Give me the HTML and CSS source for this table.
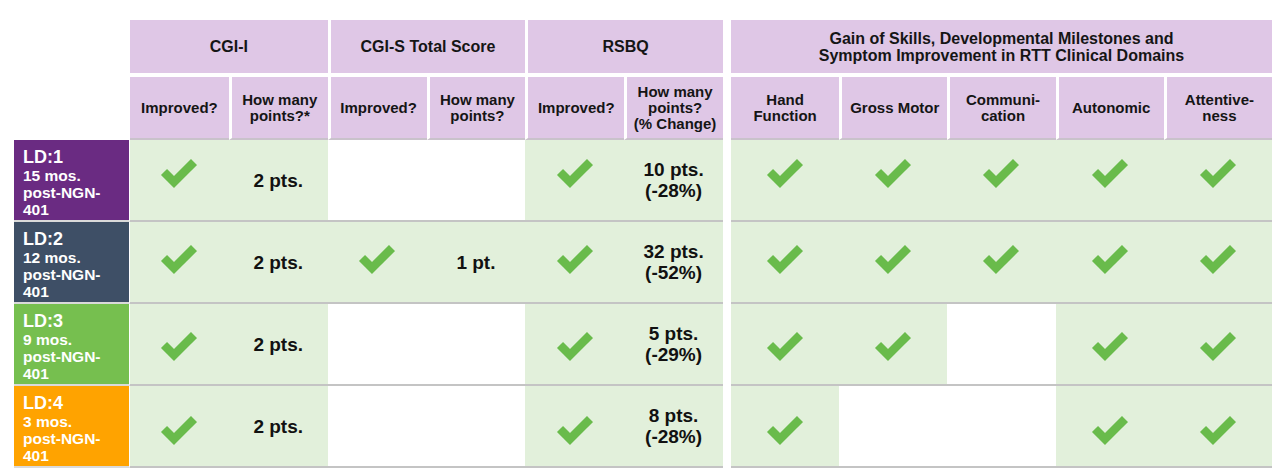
FILE: index.html
```html
<!DOCTYPE html>
<html>
<head>
<meta charset="utf-8">
<link rel="stylesheet" href="styles.css">
</head>
<body>
<svg width="0" height="0" class="defs">
  <defs>
    <symbol id="chk" viewBox="0 0 38 30"><polyline points="4,13 14,23 34,3"/></symbol>
  </defs>
</svg>
<div class="page">
  <div class="tbl left">
    <div class="corner"></div>
    <div class="gh first">CGI-I</div>
    <div class="gh">CGI-S Total Score</div>
    <div class="gh">RSBQ</div>
    <div class="sh first">Improved?</div>
    <div class="sh">How many<br>points?*</div>
    <div class="sh">Improved?</div>
    <div class="sh">How many<br>points?</div>
    <div class="sh">Improved?</div>
    <div class="sh">How many<br>points?<br>(% Change)</div>

    <div class="lab ld1 r1"><span class="ld">LD:1</span><span>15 mos.</span><span>post-NGN-</span><span>401</span></div>
    <div class="c g r1"><svg class="chk"><use href="#chk"/></svg></div>
    <div class="c g r1 t">2 pts.</div>
    <div class="c w r1"></div>
    <div class="c w r1"></div>
    <div class="c g r1"><svg class="chk"><use href="#chk"/></svg></div>
    <div class="c g r1 t">10 pts.<br>(-28%)</div>

    <div class="lab ld2 r2"><span class="ld">LD:2</span><span>12 mos.</span><span>post-NGN-</span><span>401</span></div>
    <div class="c g r2"><svg class="chk"><use href="#chk"/></svg></div>
    <div class="c g r2 t">2 pts.</div>
    <div class="c g r2"><svg class="chk"><use href="#chk"/></svg></div>
    <div class="c g r2 t">1 pt.</div>
    <div class="c g r2"><svg class="chk"><use href="#chk"/></svg></div>
    <div class="c g r2 t">32 pts.<br>(-52%)</div>

    <div class="lab ld3 r3"><span class="ld">LD:3</span><span>9 mos.</span><span>post-NGN-</span><span>401</span></div>
    <div class="c g r3"><svg class="chk"><use href="#chk"/></svg></div>
    <div class="c g r3 t">2 pts.</div>
    <div class="c w r3"></div>
    <div class="c w r3"></div>
    <div class="c g r3"><svg class="chk"><use href="#chk"/></svg></div>
    <div class="c g r3 t">5 pts.<br>(-29%)</div>

    <div class="lab ld4 r4"><span class="ld">LD:4</span><span>3 mos.</span><span>post-NGN-</span><span>401</span></div>
    <div class="c g r4"><svg class="chk"><use href="#chk"/></svg></div>
    <div class="c g r4 t">2 pts.</div>
    <div class="c w r4"></div>
    <div class="c w r4"></div>
    <div class="c g r4"><svg class="chk"><use href="#chk"/></svg></div>
    <div class="c g r4 t">8 pts.<br>(-28%)</div>
  </div>

  <div class="tbl right">
    <div class="gh first wide">Gain of Skills, Developmental Milestones and<br>Symptom Improvement in RTT Clinical Domains</div>
    <div class="sh first">Hand<br>Function</div>
    <div class="sh">Gross Motor</div>
    <div class="sh">Communi-<br>cation</div>
    <div class="sh">Autonomic</div>
    <div class="sh">Attentive-<br>ness</div>

    <div class="c g r1"><svg class="chk"><use href="#chk"/></svg></div>
    <div class="c g r1"><svg class="chk"><use href="#chk"/></svg></div>
    <div class="c g r1"><svg class="chk"><use href="#chk"/></svg></div>
    <div class="c g r1"><svg class="chk"><use href="#chk"/></svg></div>
    <div class="c g r1"><svg class="chk"><use href="#chk"/></svg></div>

    <div class="c g r2"><svg class="chk"><use href="#chk"/></svg></div>
    <div class="c g r2"><svg class="chk"><use href="#chk"/></svg></div>
    <div class="c g r2"><svg class="chk"><use href="#chk"/></svg></div>
    <div class="c g r2"><svg class="chk"><use href="#chk"/></svg></div>
    <div class="c g r2"><svg class="chk"><use href="#chk"/></svg></div>

    <div class="c g r3"><svg class="chk"><use href="#chk"/></svg></div>
    <div class="c g r3"><svg class="chk"><use href="#chk"/></svg></div>
    <div class="c w r3"></div>
    <div class="c g r3"><svg class="chk"><use href="#chk"/></svg></div>
    <div class="c g r3"><svg class="chk"><use href="#chk"/></svg></div>

    <div class="c g r4"><svg class="chk"><use href="#chk"/></svg></div>
    <div class="c w r4"></div>
    <div class="c w r4"></div>
    <div class="c g r4"><svg class="chk"><use href="#chk"/></svg></div>
    <div class="c g r4"><svg class="chk"><use href="#chk"/></svg></div>
  </div>
</div>
</body>
</html>
```

FILE: styles.css
```css
* { box-sizing: border-box; }
html, body { margin: 0; padding: 0; background: #fff; }
body {
  font-family: "Liberation Sans", Arial, sans-serif;
  font-weight: bold;
  color: #151515;
  width: 1280px;
  height: 476px;
  overflow: hidden;
}
.defs { position: absolute; }
.page {
  display: flex;
  gap: 8px;
  padding: 20px 0 0 14px;
}
.tbl {
  display: grid;
  grid-template-rows: 57px 63px repeat(4, 82px);
}
.left {
  width: 709px;
  grid-template-columns: 116px repeat(6, 1fr);
}
.right {
  width: 541px;
  grid-template-columns: repeat(5, 1fr);
}
.corner { grid-row: span 2; }
.gh {
  grid-column: span 2;
  background: #dfc7e6;
  border-bottom: 4px solid #fff;
  border-left: 3px solid #fff;
  display: flex;
  align-items: center;
  justify-content: center;
  text-align: center;
  font-size: 16px;
  line-height: 17px;
}
.gh.first { border-left: 0; }
.gh.wide { grid-column: span 5; font-size: 16px; }
.sh {
  background: #dfc7e6;
  border-left: 3px solid #fff;
  border-bottom: 2px solid #c9c2cb;
  display: flex;
  align-items: center;
  justify-content: center;
  text-align: center;
  font-size: 15px;
  line-height: 16px;
}
.sh.first { border-left: 0; }
.c {
  border-bottom: 2px solid #c4c4c4;
  display: flex;
  align-items: center;
  justify-content: center;
  text-align: center;
}
.g { background: #e2f0db; }
.w { background: #fff; }
.t {
  font-size: 19px;
  line-height: 21px;
  color: #111;
}
.chk {
  width: 38px;
  height: 30px;
  fill: none;
  stroke: #69bb4b;
  stroke-width: 8.5;
  stroke-linejoin: miter;
  stroke-linecap: butt;
}
.r1 .chk { transform: translateY(-6px); }
.r2 .chk { transform: translateY(-2px); }
.r3 .chk { transform: translateY(3px); }
.r4 .chk { transform: translateY(5px); }
.lab {
  border-bottom: 2px solid #dadada;
  border-right: 1px solid #fff;
  color: #fff;
  display: flex;
  flex-direction: column;
  padding: 8px 0 0 9px;
  font-size: 15.5px;
  line-height: 17px;
}
.lab .ld { font-size: 18px; line-height: 18px; margin-bottom: 1px; }
.ld1 { background: #6a2b82; }
.ld2 { background: #3e4f66; }
.ld3 { background: #76bf4f; }
.ld4 { background: #ffa300; }
```
